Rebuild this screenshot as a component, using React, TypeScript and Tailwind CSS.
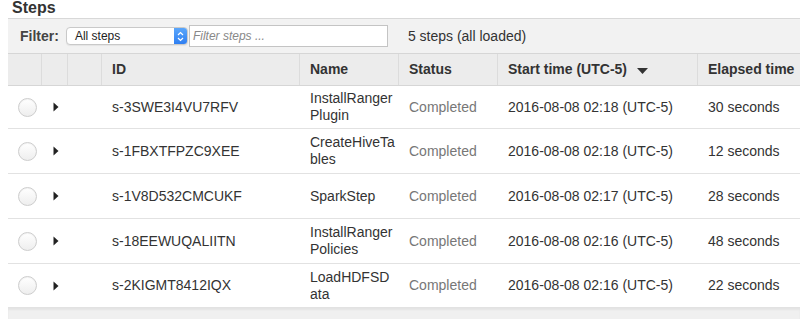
import React from "react";

interface Step {
  id: string;
  name: string;
  status: string;
  start: string;
  elapsed: string;
  height: string;
}

const steps: Step[] = [
  { id: "s-3SWE3I4VU7RFV", name: "InstallRangerPlugin", status: "Completed", start: "2016-08-08 02:18 (UTC-5)", elapsed: "30 seconds", height: "h-[43px]" },
  { id: "s-1FBXTFPZC9XEE", name: "CreateHiveTables", status: "Completed", start: "2016-08-08 02:18 (UTC-5)", elapsed: "12 seconds", height: "h-[45px]" },
  { id: "s-1V8D532CMCUKF", name: "SparkStep", status: "Completed", start: "2016-08-08 02:17 (UTC-5)", elapsed: "28 seconds", height: "h-[45px]" },
  { id: "s-18EEWUQALIITN", name: "InstallRangerPolicies", status: "Completed", start: "2016-08-08 02:16 (UTC-5)", elapsed: "48 seconds", height: "h-[45px]" },
  { id: "s-2KIGMT8412IQX", name: "LoadHDFSData", status: "Completed", start: "2016-08-08 02:16 (UTC-5)", elapsed: "22 seconds", height: "h-[44px]" },
];

// column template shared by header and rows
const cols = "grid grid-cols-[34px_26px_34px_198px_99px_99px_200px_1fr]";

const Radio = () => (
  <span className="block w-[19px] h-[19px] rounded-full border border-[#cdcdcd] bg-gradient-to-b from-white to-[#eeeeee] shadow-[inset_0_1px_1px_rgba(0,0,0,0.05)]" />
);

const Caret = () => (
  <svg width="6" height="10" viewBox="0 0 6 10">
    <path d="M0.5 0.5 L5.5 5 L0.5 9.5 Z" fill="#222" />
  </svg>
);

const HeaderCell: React.FC<{ children?: React.ReactNode; last?: boolean }> = ({ children, last }) => (
  <div className={`flex items-center px-[10px] font-bold text-[#333] whitespace-nowrap ${last ? "" : "border-r border-[#dcdcdc]"}`}>
    {children}
  </div>
);

export default function App() {
  return (
    <div className="w-[800px] h-[319px] overflow-hidden bg-white font-['Liberation_Sans',Arial,sans-serif] text-[14px] text-[#333]">
      <div className="h-[18px] pl-[12px]">
        <h2 className="text-[16px] leading-[15px] font-bold text-[#333]">Steps</h2>
      </div>

      <div className="ml-2">
        {/* filter toolbar */}
        <div className="h-[35px] flex items-center bg-[#f2f2f2] border-t border-[#d8d8d8]">
          <span className="ml-[12px] text-[14px] font-bold text-[#444]">Filter:</span>
          <div className="ml-[7px] flex h-[18px] w-[122px] rounded-[4px] border border-[#c9c9c9] bg-white overflow-hidden shadow-[0_1px_1px_rgba(0,0,0,0.06)]">
            <span className="flex-1 pl-[8px] text-[12px] leading-[16px] text-[#222]">All steps</span>
            <span className="w-[13px] flex items-center justify-center bg-gradient-to-b from-[#5aa6fb] to-[#2f7ff1]">
              <svg width="7" height="11" viewBox="0 0 7 11">
                <path d="M1 4 L3.5 1.5 L6 4 M1 7 L3.5 9.5 L6 7" fill="none" stroke="white" strokeWidth="1.2" />
              </svg>
            </span>
          </div>
          <div className="ml-[1px] h-[22px] w-[199px] border border-[#c4c4c4] bg-white flex items-center pl-[3px]">
            <span className="italic text-[12px] text-[#888]">Filter steps ...</span>
          </div>
          <span className="ml-[20px] text-[14px] text-[#333]">5 steps (all loaded)</span>
        </div>

        {/* column header */}
        <div className={`${cols} h-[33px] bg-[#ececec] border-t border-b border-[#d6d6d6]`}>
          <HeaderCell />
          <HeaderCell />
          <HeaderCell />
          <HeaderCell>ID</HeaderCell>
          <HeaderCell>Name</HeaderCell>
          <HeaderCell>Status</HeaderCell>
          <HeaderCell>
            Start time (UTC-5)
            <svg className="ml-[10px] mt-[3px]" width="11" height="6" viewBox="0 0 11 6">
              <path d="M0 0 H11 L5.5 6 Z" fill="#333" />
            </svg>
          </HeaderCell>
          <HeaderCell last>Elapsed time</HeaderCell>
        </div>

        {steps.map((s) => (
          <div key={s.id} className={`${cols} ${s.height} border-b border-[#e2e2e2]`}>
            <div className="flex items-center pl-[10px]">
              <Radio />
            </div>
            <div className="flex items-center pl-[11px]">
              <Caret />
            </div>
            <div />
            <div className="flex items-center px-[10px]">{s.id}</div>
            <div className="flex items-center pl-[10px]">
              <span className="w-[87px] shrink-0 break-all leading-[17px]">{s.name}</span>
            </div>
            <div className="flex items-center px-[10px] text-[#777]">{s.status}</div>
            <div className="flex items-center px-[10px]">{s.start}</div>
            <div className="flex items-center px-[10px] whitespace-nowrap">{s.elapsed}</div>
          </div>
        ))}

        <div className="h-[12px] bg-[#f0f0f0] shadow-[inset_0_2px_2px_rgba(0,0,0,0.05)]" />
      </div>
    </div>
  );
}
